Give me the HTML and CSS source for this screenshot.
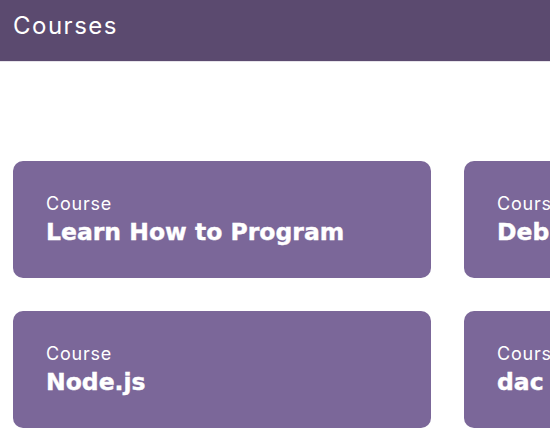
FILE: index.html
```html
<!DOCTYPE html>
<html>
<head>
<meta charset="utf-8">
<link rel="stylesheet" href="styles.css">
</head>
<body>
<header class="topbar"><h1 class="title">Courses</h1></header>
<main class="grid">
  <div class="card"><div class="label">Course</div><div class="name">Learn How to Program</div></div>
  <div class="card"><div class="label">Course</div><div class="name">Debugging</div></div>
  <div class="card"><div class="label">Course</div><div class="name">Node.js</div></div>
  <div class="card"><div class="label">Course</div><div class="name">dac</div></div>
</main>
</body>
</html>
```
FILE: styles.css
```css
html, body { margin: 0; padding: 0; overflow: hidden; background: #fff; }
body { font-family: Inter, "Open Sans", sans-serif; }
.topbar {
  height: 61px;
  background: #5b4a6f;
  display: flex;
  align-items: center;
  padding: 0 13px;
  border-bottom: 1px solid #e6e3ea;
}
.title { margin: 0; font-size: 24px; font-weight: 400; color: #fff; padding-bottom: 11px; letter-spacing: 1.5px; }
.grid {
  display: grid;
  grid-template-columns: 418px 418px;
  gap: 33px;
  padding: 99px 13px 0;
  width: max-content;
}
.card {
  height: 117px;
  box-sizing: border-box;
  background: #7b6799;
  border-radius: 10px;
  padding: 32px 33px 0;
  color: #fff;
}
.label { font-size: 18px; line-height: 22px; letter-spacing: 0.8px; }
.name {
  font-family: "DejaVu Sans", sans-serif;
  font-size: 23.5px;
  font-weight: 700;
  line-height: 32px;
  margin-top: 1px;
  -webkit-text-stroke: 0.4px #fff;
}
```
